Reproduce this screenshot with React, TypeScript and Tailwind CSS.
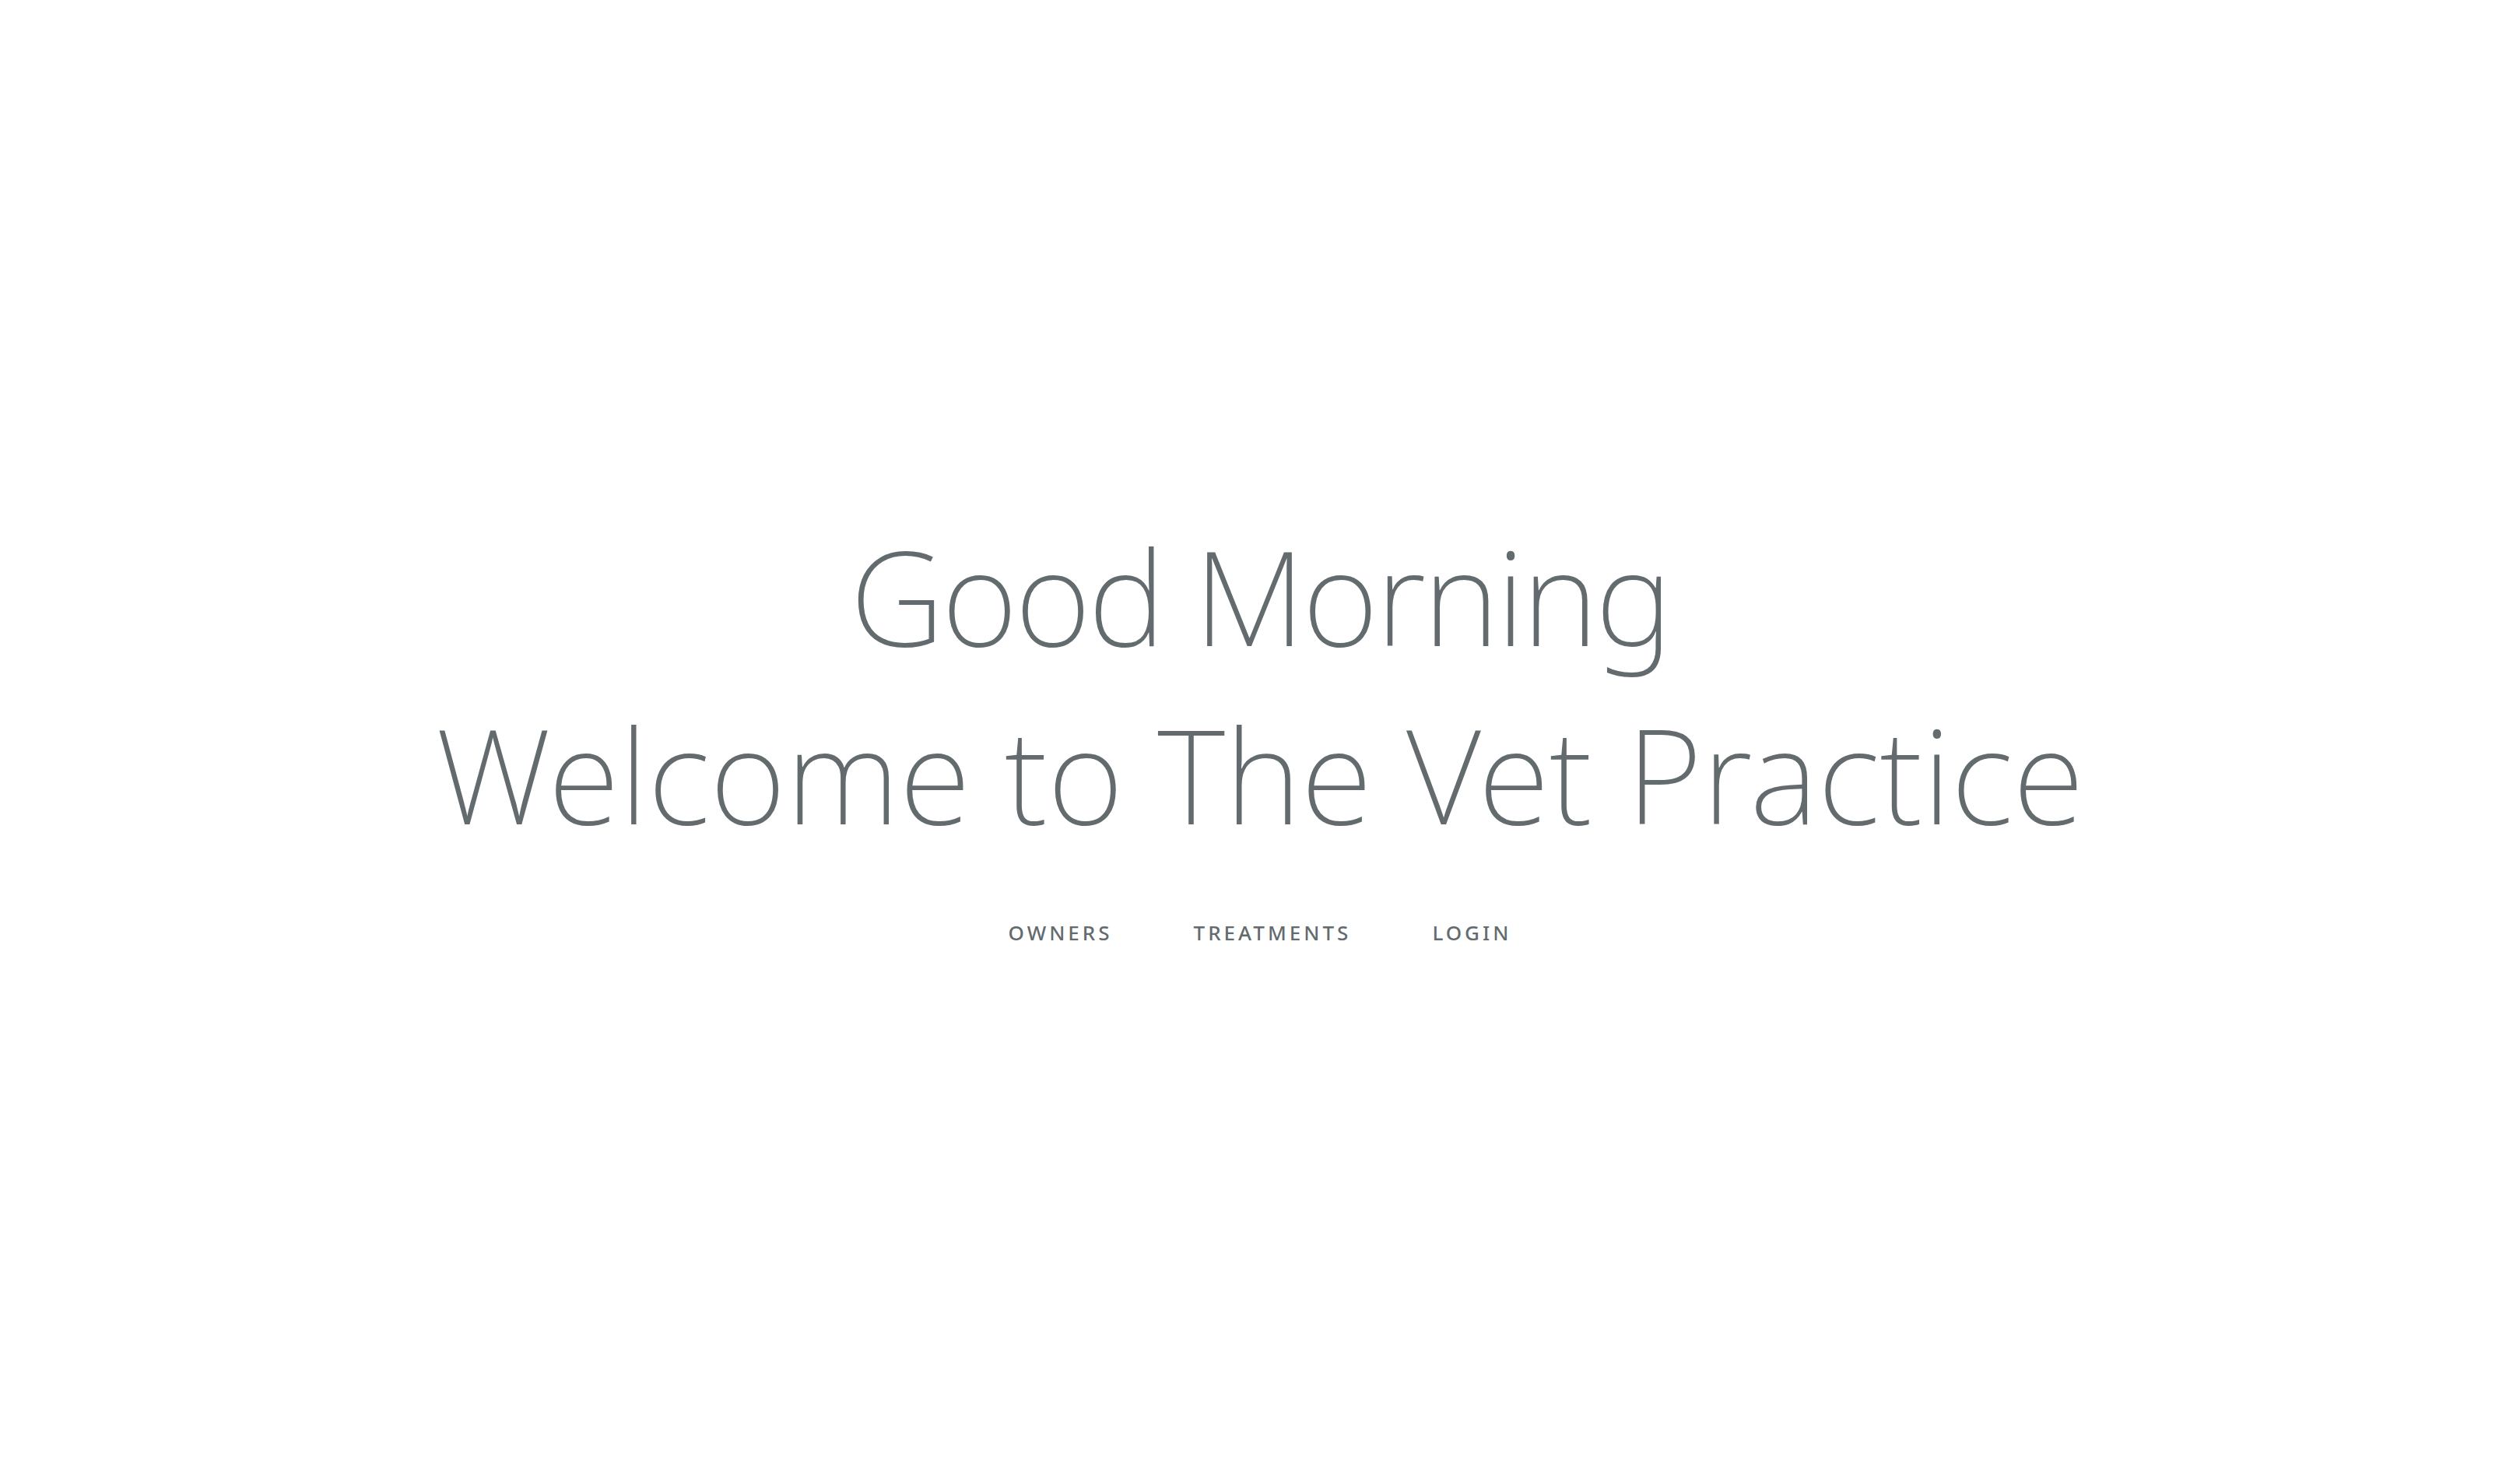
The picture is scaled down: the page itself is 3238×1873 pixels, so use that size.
const links = ["Owners", "Treatments", "Login"];

export default function App() {
  return (
    <div className="flex h-screen items-center justify-center bg-white pb-[8px] text-[#636b6f] [font-family:'Noto_Sans',sans-serif]">
      <div className="text-center">
        <h1 className="mb-[73px] text-[168px] font-extralight leading-[229px]">
          <span className="tracking-[-3.5px]">Good Morning</span>
          <br />
          Welcome to The Vet Practice
        </h1>
        <nav className="flex justify-center">
          {links.map((l) => (
            <a
              key={l}
              href="#"
              className="px-[52px] text-[26px] font-medium uppercase leading-[35px] tracking-[4px] text-[#636b6f] no-underline"
            >
              {l}
            </a>
          ))}
        </nav>
      </div>
    </div>
  );
}
